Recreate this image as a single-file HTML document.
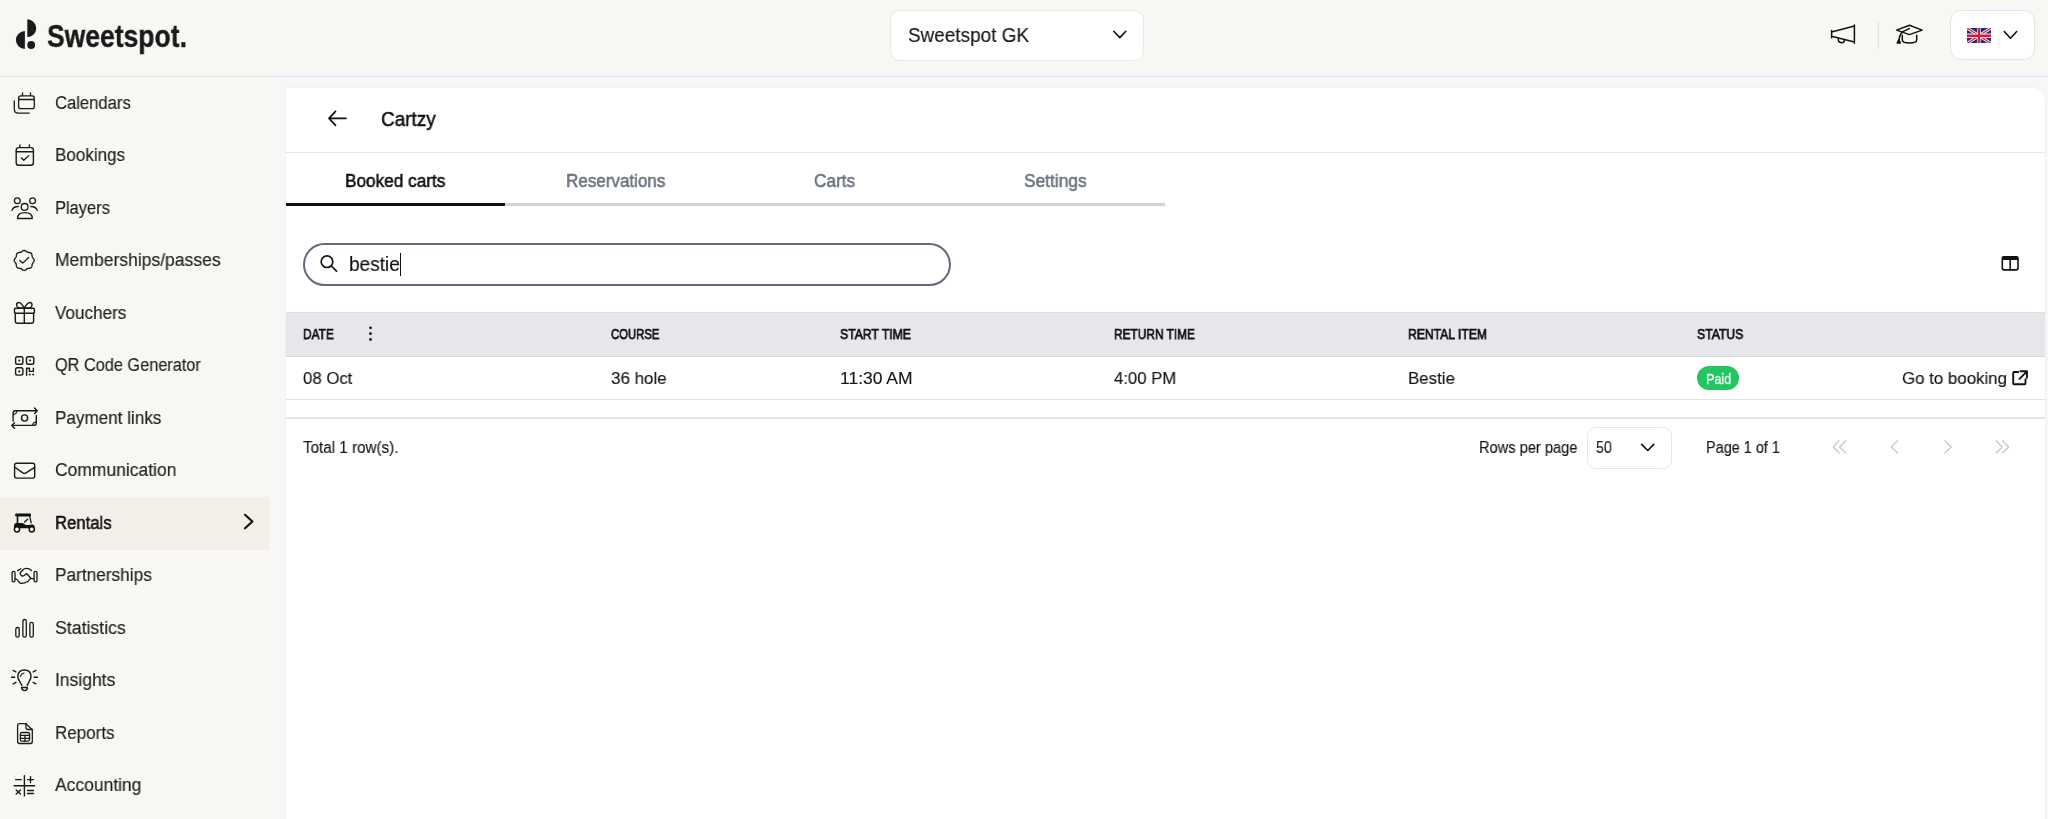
<!DOCTYPE html>
<html><head><meta charset="utf-8">
<style>
*{box-sizing:border-box;margin:0;padding:0}
html,body{width:2048px;height:819px;overflow:hidden;background:#f7f7f7;font-family:"Liberation Sans",sans-serif;color:#1c1c1c}
.abs{position:absolute}
.box{position:absolute}
#hdr{position:absolute;left:0;top:0;width:2048px;height:77.3px;background:#f8f7f3;border-bottom:1.6px solid #e1e2e9}
#side{position:absolute;left:0;top:77.3px;width:269px;height:742px;background:#f8f7f3}
#card{position:absolute;left:285.5px;top:88px;width:1759.5px;height:760px;background:#fff;border-radius:0 10px 0 0;box-shadow:0 0 0 0.5px #ededed}
.t{position:absolute;white-space:nowrap;line-height:1;transform-origin:0 0;will-change:transform}
#ic{position:absolute;left:0;top:0}
</style></head>
<body>
<div id="hdr"></div>
<div class="t" style="left:47.00px;top:21px;font-size:31.88px;color:#1a1a1a;font-weight:bold;transform:scaleX(0.8318);-webkit-text-stroke:0.35px #1a1a1a;">Sweetspot.</div>
<div class="box" style="left:890px;top:10px;width:254px;height:50.5px;background:#fff;border:1px solid #e8e8ea;border-radius:10px"></div>
<div class="t" style="left:908.40px;top:25px;font-size:20.43px;color:#161616;-webkit-text-stroke:0.15px #161616;transform:scaleX(0.9271);">Sweetspot GK</div>
<div class="box" style="left:1949.5px;top:10.2px;width:85px;height:50.3px;background:#fff;border:1.5px solid #e3e3ea;border-radius:11px"></div>
<svg class="abs" style="left:1967px;top:27.5px" width="24" height="15.5" viewBox="0 0 60 30" preserveAspectRatio="none">
<rect width="60" height="30" fill="#1b2f7a"/>
<path d="M0,0 L60,30 M60,0 L0,30" stroke="#fff" stroke-width="6"/>
<path d="M0,0 L60,30 M60,0 L0,30" stroke="#cf1f3a" stroke-width="2.6"/>
<path d="M30,0 V30 M0,15 H60" stroke="#f4f4f8" stroke-width="8.5"/>
<path d="M30,0 V30 M0,15 H60" stroke="#cf1f3a" stroke-width="5.2"/>
</svg>
<div id="side"></div>
<div class="box" style="left:0;top:497px;width:269px;height:52.5px;background:#f2efe8"></div>
<div class="t" style="left:55.30px;top:94px;font-size:18.41px;color:#1f1f1f;-webkit-text-stroke:0.15px #1f1f1f;transform:scaleX(0.9035);">Calendars</div>
<div class="t" style="left:55.30px;top:146px;font-size:18.41px;color:#1f1f1f;-webkit-text-stroke:0.15px #1f1f1f;transform:scaleX(0.9258);">Bookings</div>
<div class="t" style="left:55.30px;top:199px;font-size:18.41px;color:#1f1f1f;-webkit-text-stroke:0.15px #1f1f1f;transform:scaleX(0.8944);">Players</div>
<div class="t" style="left:55.30px;top:251px;font-size:18.41px;color:#1f1f1f;-webkit-text-stroke:0.15px #1f1f1f;transform:scaleX(0.9523);">Memberships/passes</div>
<div class="t" style="left:55.30px;top:304px;font-size:18.41px;color:#1f1f1f;-webkit-text-stroke:0.15px #1f1f1f;transform:scaleX(0.9292);">Vouchers</div>
<div class="t" style="left:55.30px;top:356px;font-size:18.41px;color:#1f1f1f;-webkit-text-stroke:0.15px #1f1f1f;transform:scaleX(0.8852);">QR Code Generator</div>
<div class="t" style="left:55.30px;top:409px;font-size:18.41px;color:#1f1f1f;-webkit-text-stroke:0.15px #1f1f1f;transform:scaleX(0.9286);">Payment links</div>
<div class="t" style="left:55.30px;top:461px;font-size:18.41px;color:#1f1f1f;-webkit-text-stroke:0.15px #1f1f1f;transform:scaleX(0.9487);">Communication</div>
<div class="t" style="left:55.30px;top:514px;font-size:18.41px;color:#111;-webkit-text-stroke:0.55px #111;transform:scaleX(0.9068);">Rentals</div>
<div class="t" style="left:55.30px;top:566px;font-size:18.41px;color:#1f1f1f;-webkit-text-stroke:0.15px #1f1f1f;transform:scaleX(0.9368);">Partnerships</div>
<div class="t" style="left:55.30px;top:619px;font-size:18.41px;color:#1f1f1f;-webkit-text-stroke:0.15px #1f1f1f;transform:scaleX(0.9601);">Statistics</div>
<div class="t" style="left:55.30px;top:671px;font-size:18.41px;color:#1f1f1f;-webkit-text-stroke:0.15px #1f1f1f;transform:scaleX(0.9507);">Insights</div>
<div class="t" style="left:55.30px;top:724px;font-size:18.41px;color:#1f1f1f;-webkit-text-stroke:0.15px #1f1f1f;transform:scaleX(0.9234);">Reports</div>
<div class="t" style="left:55.30px;top:776px;font-size:18.41px;color:#1f1f1f;-webkit-text-stroke:0.15px #1f1f1f;transform:scaleX(0.9487);">Accounting</div>
<div id="card"></div>
<div class="box" style="left:285.5px;top:152px;width:1759.5px;height:1px;background:#e5e7eb"></div>
<div class="t" style="left:380.90px;top:108px;font-size:21.01px;color:#111;-webkit-text-stroke:0.55px #111;transform:scaleX(0.9010);">Cartzy</div>
<div class="box" style="left:505px;top:203px;width:660px;height:3px;background:#d1d5db"></div>
<div class="box" style="left:285.5px;top:202.7px;width:219.5px;height:3.3px;background:#111"></div>
<div class="t" style="left:345.40px;top:172px;font-size:18.70px;color:#111;-webkit-text-stroke:0.55px #111;transform:scaleX(0.9202);">Booked carts</div>
<div class="t" style="left:565.60px;top:172px;font-size:18.70px;color:#6b7280;-webkit-text-stroke:0.55px #6b7280;transform:scaleX(0.9110);">Reservations</div>
<div class="t" style="left:814.40px;top:172px;font-size:18.70px;color:#6b7280;-webkit-text-stroke:0.55px #6b7280;transform:scaleX(0.9224);">Carts</div>
<div class="t" style="left:1023.70px;top:172px;font-size:18.70px;color:#6b7280;-webkit-text-stroke:0.55px #6b7280;transform:scaleX(0.9268);">Settings</div>
<div class="box" style="left:303.2px;top:243.2px;width:647.8px;height:42.7px;border:2px solid #636a79;border-radius:22px"></div>
<div class="t" style="left:348.90px;top:255px;font-size:19.50px;color:#111;-webkit-text-stroke:0.15px #111;transform:scaleX(0.9764);">bestie</div>
<div class="box" style="left:399.7px;top:253.4px;width:1.2px;height:22.3px;background:#111"></div>
<div class="box" style="left:285.5px;top:312px;width:1759.5px;height:45px;background:#e5e7eb;border-top:1px solid #dcdee3;border-bottom:1px solid #d6d8de"></div>
<div class="box" style="left:285.5px;top:399px;width:1759.5px;height:1px;background:#dfe1e6"></div>
<div class="box" style="left:285.5px;top:417px;width:1759.5px;height:1.5px;background:#e3e5e9"></div>
<div class="t" style="left:303.10px;top:327px;font-size:14.49px;color:#111;-webkit-text-stroke:0.55px #111;transform:scaleX(0.8196);-webkit-text-stroke:0.75px #111;">DATE</div>
<div class="t" style="left:610.70px;top:327px;font-size:14.49px;color:#111;-webkit-text-stroke:0.55px #111;transform:scaleX(0.7806);-webkit-text-stroke:0.75px #111;">COURSE</div>
<div class="t" style="left:840.40px;top:327px;font-size:14.49px;color:#111;-webkit-text-stroke:0.55px #111;transform:scaleX(0.8423);-webkit-text-stroke:0.75px #111;">START TIME</div>
<div class="t" style="left:1114.00px;top:327px;font-size:14.49px;color:#111;-webkit-text-stroke:0.55px #111;transform:scaleX(0.8201);-webkit-text-stroke:0.75px #111;">RETURN TIME</div>
<div class="t" style="left:1407.60px;top:327px;font-size:14.49px;color:#111;-webkit-text-stroke:0.55px #111;transform:scaleX(0.8395);-webkit-text-stroke:0.75px #111;">RENTAL ITEM</div>
<div class="t" style="left:1696.50px;top:327px;font-size:14.49px;color:#111;-webkit-text-stroke:0.55px #111;transform:scaleX(0.8434);-webkit-text-stroke:0.75px #111;">STATUS</div>
<div class="t" style="left:303.10px;top:370px;font-size:17.39px;color:#161616;-webkit-text-stroke:0.15px #161616;transform:scaleX(0.9642);">08 Oct</div>
<div class="t" style="left:610.70px;top:370px;font-size:17.39px;color:#161616;-webkit-text-stroke:0.15px #161616;transform:scaleX(0.9762);">36 hole</div>
<div class="t" style="left:840.40px;top:370px;font-size:17.39px;color:#161616;-webkit-text-stroke:0.15px #161616;transform:scaleX(1.0057);">11:30 AM</div>
<div class="t" style="left:1114.00px;top:370px;font-size:17.39px;color:#161616;-webkit-text-stroke:0.15px #161616;transform:scaleX(0.9604);">4:00 PM</div>
<div class="t" style="left:1407.60px;top:370px;font-size:17.39px;color:#161616;-webkit-text-stroke:0.15px #161616;transform:scaleX(0.9704);">Bestie</div>
<div class="box" style="left:1696.5px;top:366.2px;width:42.5px;height:23.4px;background:#22c55e;border-radius:12px"></div>
<div class="t" style="left:1705.50px;top:372px;font-size:14.35px;color:#fff;-webkit-text-stroke:0.15px #fff;transform:scaleX(0.8777);-webkit-text-stroke:0.3px #fff;">Paid</div>
<div class="t" style="left:1901.90px;top:370px;font-size:17.39px;color:#161616;-webkit-text-stroke:0.15px #161616;transform:scaleX(0.9705);">Go to booking</div>
<div class="t" style="left:303.20px;top:440px;font-size:15.94px;color:#161616;-webkit-text-stroke:0.15px #161616;transform:scaleX(0.9540);">Total 1 row(s).</div>
<div class="t" style="left:1478.60px;top:440px;font-size:15.65px;color:#161616;-webkit-text-stroke:0.15px #161616;transform:scaleX(0.9356);">Rows per page</div>
<div class="box" style="left:1586.6px;top:426.6px;width:85.2px;height:42.9px;border:1px solid #e5e5e8;border-radius:9px"></div>
<div class="t" style="left:1596.20px;top:440px;font-size:15.65px;color:#161616;-webkit-text-stroke:0.15px #161616;transform:scaleX(0.9078);">50</div>
<div class="t" style="left:1705.80px;top:440px;font-size:15.65px;color:#161616;-webkit-text-stroke:0.15px #161616;transform:scaleX(0.9243);">Page 1 of 1</div>
<svg id="ic" width="2048" height="819" viewBox="0 0 2048 819" fill="none" stroke="#1a1a1a" stroke-width="1.45" stroke-linecap="round" stroke-linejoin="round">
<!-- logo -->
<g fill="#1a1a1a" stroke="none">
<path d="M24.9 31 A9 9 0 0 0 24.9 49 Z"/>
<path d="M27.3 19.3 A8.9 8.9 0 0 1 27.3 37.1 Z"/>
<circle cx="31.2" cy="45" r="3.9"/>
</g>
<!-- header dropdown chevron -->
<path d="M1113.8 31.3 L1119.8 37.6 L1125.8 31.3" stroke="#111" stroke-width="1.6"/>
<!-- megaphone -->
<g stroke="#111" stroke-width="1.5">
<path d="M1831.6 30.4 V37.8 M1854.4 25 V43.2 M1831.6 31.9 L1854.4 26 M1831.6 36.3 L1854.4 41.9"/>
<path d="M1838.4 38.6 A3.2 3.2 0 0 0 1844.6 40.2"/>
</g>
<path d="M1878.3 22.8 V47.8" stroke="#dcdcdc" stroke-width="1.2"/>
<!-- grad cap -->
<g stroke="#111" stroke-width="1.5">
<path d="M1896.6 30.1 L1909.4 25.3 L1922.2 30.1 L1909.4 34.6 Z"/>
<path d="M1909.4 28.6 L1902.2 31.9 Q1899.5 35 1898.8 41"/>
<path d="M1897.2 43 L1898.8 39.8 L1900.4 43 Z" fill="#111"/>
<path d="M1902.3 35.2 V40 Q1902.3 43 1909.4 43 Q1916.7 43 1916.7 40 V35.2"/>
</g>
<!-- lang chevron -->
<path d="M2004.3 31.5 L2010.5 38.2 L2016.7 31.5" stroke="#111" stroke-width="1.6"/>

<!-- nav icons -->
<!-- calendars -->
<g stroke-width="1.3">
<rect x="18.6" y="95.8" width="15.7" height="12.8" rx="2.2"/>
<path d="M18.6 99.5 H34.3 M22.5 92.8 V95.6 M30.5 92.8 V95.6"/>
<path d="M14.3 100.8 V109 Q14.3 113.2 18.5 113.2 H29.2"/>
</g>
<!-- bookings -->
<g stroke-width="1.4">
<rect x="16.2" y="147.6" width="17.2" height="17.6" rx="2.5"/>
<path d="M16.2 151.7 H33.4 M19.9 145 V147.4 M29.4 145 V147.4"/>
<path d="M21.3 158 L23.8 160.3 L28.7 155.6" stroke-width="1.3"/>
</g>
<!-- players -->
<g stroke-width="1.3">
<circle cx="17.3" cy="200.8" r="2.9"/>
<circle cx="32.6" cy="200.8" r="2.9"/>
<circle cx="24.6" cy="206.9" r="3.4"/>
<path d="M18.3 206.5 Q13.2 206.5 11.9 210.5"/>
<path d="M30.9 206.5 Q36 206.5 37.3 210.5"/>
<path d="M17.5 218.5 Q17.5 212.7 24.9 212.7 Q32.3 212.7 32.3 218.5 Z"/>
</g>
<!-- memberships badge -->
<path stroke-width="1.35" d="M24.20 250.45 L24.59 250.48 L24.97 250.59 L25.34 250.74 L25.70 250.95 L26.03 251.18 L26.35 251.42 L26.66 251.66 L26.97 251.88 L27.27 252.07 L27.59 252.22 L27.92 252.34 L28.27 252.42 L28.64 252.48 L29.02 252.53 L29.42 252.58 L29.83 252.66 L30.22 252.76 L30.59 252.91 L30.94 253.11 L31.24 253.36 L31.49 253.66 L31.69 254.01 L31.84 254.38 L31.94 254.77 L32.02 255.18 L32.07 255.58 L32.12 255.96 L32.18 256.33 L32.26 256.68 L32.38 257.01 L32.53 257.33 L32.72 257.63 L32.94 257.94 L33.18 258.25 L33.42 258.57 L33.65 258.90 L33.86 259.26 L34.01 259.63 L34.12 260.01 L34.15 260.40 L34.12 260.79 L34.01 261.17 L33.86 261.54 L33.65 261.90 L33.42 262.23 L33.18 262.55 L32.94 262.86 L32.72 263.17 L32.53 263.47 L32.38 263.79 L32.26 264.12 L32.18 264.47 L32.12 264.84 L32.07 265.22 L32.02 265.62 L31.94 266.03 L31.84 266.42 L31.69 266.79 L31.49 267.14 L31.24 267.44 L30.94 267.69 L30.59 267.89 L30.22 268.04 L29.83 268.14 L29.42 268.22 L29.02 268.27 L28.64 268.32 L28.27 268.38 L27.92 268.46 L27.59 268.58 L27.27 268.73 L26.97 268.92 L26.66 269.14 L26.35 269.38 L26.03 269.62 L25.70 269.85 L25.34 270.06 L24.97 270.21 L24.59 270.32 L24.20 270.35 L23.81 270.32 L23.43 270.21 L23.06 270.06 L22.70 269.85 L22.37 269.62 L22.05 269.38 L21.74 269.14 L21.43 268.92 L21.13 268.73 L20.81 268.58 L20.48 268.46 L20.13 268.38 L19.76 268.32 L19.38 268.27 L18.98 268.22 L18.57 268.14 L18.18 268.04 L17.81 267.89 L17.46 267.69 L17.16 267.44 L16.91 267.14 L16.71 266.79 L16.56 266.42 L16.46 266.03 L16.38 265.62 L16.33 265.22 L16.28 264.84 L16.22 264.47 L16.14 264.12 L16.02 263.79 L15.87 263.47 L15.68 263.17 L15.46 262.86 L15.22 262.55 L14.98 262.23 L14.75 261.90 L14.54 261.54 L14.39 261.17 L14.28 260.79 L14.25 260.40 L14.28 260.01 L14.39 259.63 L14.54 259.26 L14.75 258.90 L14.98 258.57 L15.22 258.25 L15.46 257.94 L15.68 257.63 L15.87 257.33 L16.02 257.01 L16.14 256.68 L16.22 256.33 L16.28 255.96 L16.33 255.58 L16.38 255.18 L16.46 254.77 L16.56 254.38 L16.71 254.01 L16.91 253.66 L17.16 253.36 L17.46 253.11 L17.81 252.91 L18.18 252.76 L18.57 252.66 L18.98 252.58 L19.38 252.53 L19.76 252.48 L20.13 252.42 L20.48 252.34 L20.81 252.22 L21.13 252.07 L21.43 251.88 L21.74 251.66 L22.05 251.42 L22.37 251.18 L22.70 250.95 L23.06 250.74 L23.43 250.59 L23.81 250.48 Z"/>
<path stroke-width="1.3" d="M19.8 260.4 L22.8 263.1 L28.6 257.5"/>
<!-- vouchers -->
<g stroke-width="1.4">
<rect x="14.5" y="308.3" width="19.9" height="5" rx="1"/>
<path d="M15.3 313.3 V321 Q15.3 323.3 17.6 323.3 H31.3 Q33.6 323.3 33.6 321 V313.3"/>
<path d="M24.3 308.3 V323.3"/>
<path d="M24.3 308.2 Q21 302 18.3 302.5 Q15.8 303.5 17 306.5 Q17.8 308.2 24.3 308.2 Q30.8 308.2 31.6 306.5 Q32.8 303.5 30.3 302.5 Q27.6 302 24.3 308.2"/>
</g>
<!-- qr -->
<g stroke-width="1.4">
<rect x="15.6" y="356.8" width="7.3" height="7.4" rx="1.8"/>
<rect x="26.5" y="356.8" width="7.3" height="7.4" rx="1.8"/>
<rect x="15.6" y="367.7" width="7.3" height="7.4" rx="1.8"/>
<path d="M26.6 375.3 V368.2 H29.4 V371.4 H33.4 V368.2"/>
</g>
<g fill="#1f1f1f" stroke="none">
<circle cx="19.3" cy="360.5" r="1.05"/><circle cx="30.1" cy="360.5" r="1.05"/><circle cx="19.3" cy="371.4" r="1.05"/>
<circle cx="29.7" cy="374.6" r="1"/><circle cx="33.1" cy="374.6" r="1"/>
</g>
<!-- payment links -->
<g stroke-width="1.4">
<path d="M13.1 421 V413.2 Q13.1 410.8 15.5 410.8 H36.8"/>
<path d="M34.6 408.1 L37.2 410.8 L34.6 413.4"/>
<path d="M36.3 415.4 V423 Q36.3 425.4 33.9 425.4 H12"/>
<path d="M14.5 422.8 L11.9 425.4 L14.5 428.2"/>
<circle cx="24.6" cy="418" r="3.1"/>
<path d="M13.2 414.5 Q16.4 414.3 16.9 411" stroke-width="1.2"/>
<path d="M36.2 421.8 Q33 422.1 32.6 425.3" stroke-width="1.2"/>
</g>
<!-- communication -->
<g stroke-width="1.4">
<rect x="14.6" y="463.2" width="20.1" height="14.9" rx="2"/>
<path d="M14.8 467.3 L22.8 472.9 Q24.4 473.9 26 472.9 L34.6 467.3"/>
</g>
<!-- rentals golf cart -->
<g stroke="#111" fill="#111">
<rect x="15.2" y="513.4" width="15.8" height="3.2" rx="1.2" stroke="none"/>
<path d="M17.5 516 V523.5" stroke-width="1.6" fill="none"/>
<path d="M29.7 516.5 L31.2 523" stroke-width="1.2" fill="none"/>
<path d="M24.6 522 L27.6 519.3" stroke-width="1.3" fill="none"/>
<path stroke="none" d="M14 525.5 Q14 523.2 16.2 523.1 L20.5 523 Q23 522.8 25 524.4 Q26.5 525.3 28.5 525 L32.3 524.4 Q34.7 524.6 34.7 527 L34.6 528.2 L14 528.2 Z"/>
<circle cx="17" cy="529.3" r="2.6" fill="#fff" stroke-width="1.5"/>
<circle cx="31.8" cy="529.3" r="2.6" fill="#fff" stroke-width="1.5"/>
</g>
<!-- rentals chevron -->
<path d="M245 514.8 L252.4 521.5 L245 528.3" stroke="#111" stroke-width="2.2"/>
<!-- partnerships -->
<g stroke-width="1.3">
<rect x="12.1" y="571.3" width="2.9" height="10.5" rx="1.4"/>
<rect x="34.1" y="571.3" width="2.9" height="10.5" rx="1.4"/>
<path d="M17.6 570.6 L20.9 568.7"/>
<path d="M31.4 570.5 Q29.2 568.2 26.1 568.3 Q24.5 568.4 23.3 569.5 L20.4 572.5 Q19.8 574.8 21.8 575.9 Q23.3 576.3 24.5 575.3 L26.5 573.5 L30.6 578 Q31.8 578.9 33.8 578.8"/>
<path d="M15.3 578.8 Q16.5 578.9 17.6 580.1 L19.6 582.7 Q21 584 22.6 583 Q24.3 583.6 25.9 582.2 Q28.4 582.1 28.8 580.1 Q30.4 579.8 30.6 578"/>
</g>
<!-- statistics -->
<g stroke-width="1.3">
<rect x="15.8" y="627.5" width="3.4" height="9.6" rx="1.7"/>
<rect x="22.9" y="619.5" width="3.4" height="17.6" rx="1.7"/>
<rect x="29.9" y="622.4" width="3.4" height="14.7" rx="1.7"/>
</g>
<!-- insights -->
<g stroke-width="1.4">
<path d="M21.9 685.4 L19.5 681.2 Q17.6 678.2 17.8 675.8 Q18.6 670 24.4 670 Q30.3 670 31 675.8 Q31.2 678.2 29.3 681.2 L27.2 685.4"/>
<path d="M21.6 687.5 H27.4 Q27.2 690.6 24.5 690.6 Q21.8 690.6 21.6 687.5 Z"/>
<path d="M20.3 676.4 Q21 673.7 24 673" stroke-width="1.2"/>
<path d="M13.2 670.4 L15.9 671.9 M11.5 677.2 H14.7 M13.2 683.8 L15.9 682.3 M35.9 670.4 L33.2 671.9 M37.4 677.2 H34.2 M35.9 683.8 L33.2 682.3"/>
</g>
<!-- reports -->
<g stroke-width="1.3">
<path d="M25.9 723.7 H19.6 Q17.6 723.7 17.6 725.7 V741.5 Q17.6 743.5 19.6 743.5 H30.3 Q32.3 743.5 32.3 741.5 V729.7 Z"/>
<path d="M25.9 723.7 V727.3 Q25.9 729.5 28.1 729.5 H32.3"/>
<rect x="20.4" y="732.5" width="9.1" height="8.7" rx="1.5"/>
<path d="M20.4 735.4 H29.5 M20.4 738.3 H29.5 M24.95 735.4 V741.2"/>
</g>
<!-- accounting -->
<g stroke-width="1.4">
<path d="M24.4 775.8 V795.9 M14.1 785.8 H34.7 M15.6 779.6 H21.3 M27.5 779.6 H33.5 M30.5 776.8 V782.5 M16.2 789.9 L20.5 794.1 M20.5 789.9 L16.2 794.1 M27.5 790.5 H33.5 M27.5 793.5 H33.5"/>
</g>

<!-- card: back arrow -->
<g stroke="#111" stroke-width="1.7">
<path d="M329 118.3 H346 M335.5 111.3 L329 118.3 L335.5 125.3"/>
</g>
<!-- search icon -->
<g stroke="#111" stroke-width="1.7">
<circle cx="327" cy="261.7" r="5.8"/>
<path d="M331.3 266 L336.5 271.2"/>
</g>
<!-- column icon -->
<g stroke="#111" stroke-width="1.6">
<rect x="2002.3" y="256.9" width="15.7" height="13" rx="1.8"/>
<path d="M2010.15 257 V269.9"/>
</g>
<rect x="2002.3" y="256.6" width="15.7" height="3.4" fill="#111" stroke="none"/>
<!-- kebab -->
<g fill="#111" stroke="none">
<circle cx="370.5" cy="327.8" r="1.4"/><circle cx="370.5" cy="333.7" r="1.4"/><circle cx="370.5" cy="339.5" r="1.4"/>
</g>
<!-- external link -->
<g stroke="#111" stroke-width="1.9">
<path d="M2018.3 372 H2014.2 Q2013.2 372 2013.2 373 V383.3 Q2013.2 384.3 2014.2 384.3 H2024.5 Q2025.5 384.3 2025.5 383.3 V379.2"/>
<path d="M2020.5 371.3 H2027 V377.8 M2027 371.3 L2019.5 378.8"/>
</g>
<!-- rows per page chevron -->
<path d="M1641.6 444.4 L1647.7 450.5 L1653.8 444.4" stroke="#111" stroke-width="1.6"/>
<!-- pagination -->
<g stroke="#c5cad4" stroke-width="1.4">
<path d="M1839.2 440.8 L1833.2 447 L1839.2 453 M1845.6 440.8 L1839.6 447 L1845.6 453"/>
<path d="M1897.6 440.8 L1891.3 447 L1897.6 453"/>
<path d="M1944.9 440.8 L1951.2 447 L1944.9 453"/>
<path d="M1996.2 440.8 L2002.2 447 L1996.2 453 M2002.6 440.8 L2008.6 447 L2002.6 453"/>
</g>
</svg>

</body></html>
